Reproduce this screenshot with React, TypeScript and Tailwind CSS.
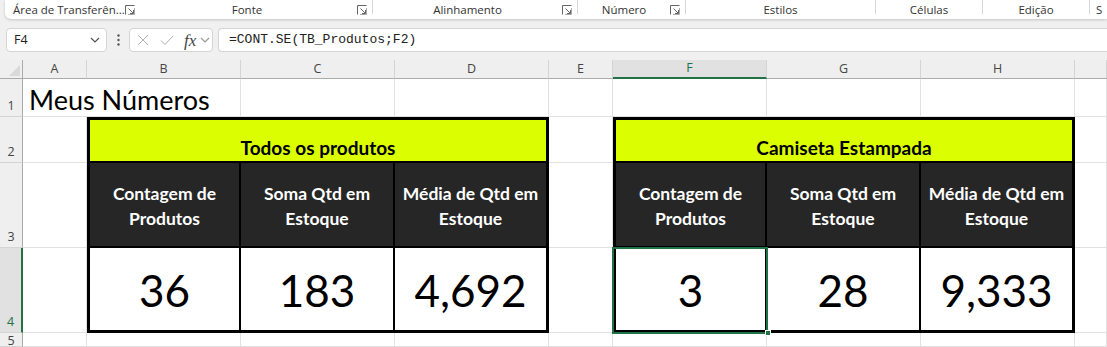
import { ReactNode } from 'react';

const uiFont = { fontFamily: '"Open Sans", "Noto Sans", sans-serif' };

function Launcher() {
  return (
    <svg width="10" height="10" viewBox="0 0 10 10" fill="none" stroke="#666" strokeWidth="1">
      <path d="M0.5 9.5V0.5H9.5" />
      <path d="M3.5 3.5L8.5 8.5M8.5 5V8.5H5" />
      <path d="M9.5 3v6.5H3" stroke="#aaa" />
    </svg>
  );
}

function Chevron({ color = '#555' }: { color?: string }) {
  return (
    <svg width="10" height="6" viewBox="0 0 10 6" fill="none" stroke={color} strokeWidth="1.2">
      <path d="M1 1l4 4 4-4" />
    </svg>
  );
}

function RibbonGroup({ label, width, launcher, left }: { label: string; width: string; launcher?: boolean; left?: boolean }) {
  return (
    <div className={`flex h-full shrink-0 ${width}`}>
      <div className={`flex flex-1 items-center ${left ? 'justify-start pl-[8px]' : 'justify-center'} whitespace-nowrap text-[#333]`}>
        {label}
      </div>
      {launcher && (
        <div className="flex items-center pr-[5px]">
          <Launcher />
        </div>
      )}
      <div className="h-[14px] w-px bg-[#d6d6d6]" />
    </div>
  );
}

function Ribbon() {
  return (
    <div className="ml-[5px] flex h-[19px] rounded-bl-[6px] bg-white text-[11.5px] shadow-[0_1px_3px_rgba(0,0,0,0.18)]" style={uiFont}>
      <RibbonGroup label="Área de Transferên..." width="w-[132px]" launcher left />
      <RibbonGroup label="Fonte" width="w-[236px]" launcher />
      <RibbonGroup label="Alinhamento" width="w-[205px]" launcher />
      <RibbonGroup label="Número" width="w-[108px]" launcher />
      <RibbonGroup label="Estilos" width="w-[190px]" />
      <RibbonGroup label="Células" width="w-[107px]" />
      <RibbonGroup label="Edição" width="w-[107px]" />
      <div className="flex items-center pl-[6px] text-[#333]">S</div>
    </div>
  );
}

function FormulaBar() {
  return (
    <div className="mt-[9px] flex h-[24px] items-stretch" style={uiFont}>
      <div className="ml-[6px] flex w-[101px] items-center justify-between rounded-[4px] border border-[#d4d4d4] bg-white pl-[7px] pr-[6px] text-[12.5px] text-[#222]">
        <span>F4</span>
        <Chevron />
      </div>
      <div className="flex w-[22px] items-center justify-center">
        <svg width="3" height="12" viewBox="0 0 3 12" fill="#555">
          <circle cx="1.5" cy="1.5" r="1.2" />
          <circle cx="1.5" cy="6" r="1.2" />
          <circle cx="1.5" cy="10.5" r="1.2" />
        </svg>
      </div>
      <div className="flex w-[84px] items-center rounded-[4px] border border-[#d4d4d4] bg-white pl-[7px]">
        <svg width="12" height="12" viewBox="0 0 12 12" stroke="#b0b0b0" strokeWidth="1">
          <path d="M1 1l10 10M11 1L1 11" />
        </svg>
        <svg className="ml-[11px]" width="14" height="11" viewBox="0 0 14 11" fill="none" stroke="#b0b0b0" strokeWidth="1">
          <path d="M1 5.5l4 4L13 1" />
        </svg>
        <span className="ml-[10px] text-[17px] italic leading-none text-[#444]" style={{ fontFamily: '"Liberation Serif", serif' }}>
          fx
        </span>
        <span className="ml-[4px]">
          <Chevron color="#999" />
        </span>
      </div>
      <div
        className="ml-[5px] flex flex-1 items-center rounded-l-[4px] border border-r-0 border-[#d4d4d4] bg-white pl-[10px] text-[13px] text-[#222]"
        style={{ fontFamily: '"Liberation Mono", monospace' }}
      >
        =CONT.SE(TB_Produtos;F2)
      </div>
    </div>
  );
}

const grid = 'border-r border-b border-[#e1e1e1]';

function RowHead({ n, selected, top }: { n: number; selected?: boolean; top?: boolean }) {
  return (
    <div
      className={`flex w-[23px] shrink-0 justify-center overflow-hidden text-[12.5px] leading-none border-b border-[#d4d4d4] ${
        top ? 'items-start pt-[2px]' : 'items-end pb-[4px]'
      } ${selected ? 'bg-[#e1e1e1] border-r-2 border-r-[#217346] text-[#217346]' : 'bg-[#efefef] border-r border-r-[#ababab] text-[#444]'}`}
      style={uiFont}
    >
      {n}
    </div>
  );
}

function ColHead({ label, width, selected }: { label: string; width: string; selected?: boolean }) {
  return (
    <div
      className={`flex shrink-0 items-center justify-center border-r border-[#d4d4d4] text-[12.5px] ${width} ${
        selected ? 'bg-[#e1e1e1] border-b-2 border-b-[#217346] text-[#217346]' : 'bg-[#efefef] border-b border-b-[#ababab] text-[#444]'
      }`}
    >
      {label}
    </div>
  );
}

function Blank({ width, className = '', children }: { width: string; className?: string; children?: ReactNode }) {
  return <div className={`shrink-0 ${width} ${grid} ${className}`}>{children}</div>;
}

const headers = ['Contagem de Produtos', 'Soma Qtd em Estoque', 'Média de Qtd em Estoque'];

function DarkCell({ text, pos }: { text: string; pos: number }) {
  const side = pos === 0 ? 'border-l-[3px] border-r-2' : pos === 1 ? 'border-r-2' : 'border-r-[3px]';
  return (
    <div className={`flex w-[154px] shrink-0 items-center justify-center border-b-2 border-black bg-[#262626] px-[6px] pt-[2px] text-center text-[17.5px] font-bold leading-[25px] text-white ${side}`}>
      {text}
    </div>
  );
}

function ValueCell({ value, pos, selected }: { value: string; pos: number; selected?: boolean }) {
  const side = pos === 0 ? 'border-l-[3px] border-r-2' : pos === 1 ? 'border-r-2' : 'border-r-[3px]';
  return (
    <div className={`relative flex w-[154px] shrink-0 items-center justify-center border-b-[3px] border-black bg-white text-[44px] leading-none text-black ${side}`}>
      <span className="pt-[2px]">{value}</span>
      {selected && (
        <>
          <div className="absolute -left-[4px] -top-[1px] -right-[3px] -bottom-[4px] z-10 border-2 border-[#217346]" />
          <div className="absolute -bottom-[6px] -right-[6px] z-10 h-[6px] w-[6px] border border-white bg-[#217346]" />
        </>
      )}
    </div>
  );
}

function TitleCell({ text }: { text: string }) {
  return (
    <div className="flex w-[462px] shrink-0 items-end justify-center border-[3px] border-b-2 border-black bg-[#dbff00] pb-[1px] text-[19px] font-bold leading-[24px]">
      {text}
    </div>
  );
}

function Sheet() {
  const cell = { fontFamily: 'Lato, "Open Sans", sans-serif' };
  return (
    <div className="bg-white" style={cell}>
      {/* column headers */}
      <div className="flex h-[19px]" style={uiFont}>
        <div className="flex w-[23px] shrink-0 items-end justify-end border-r border-b border-[#ababab] bg-[#efefef] pb-[2px] pr-[2px]">
          <svg width="11" height="11" viewBox="0 0 11 11">
            <polygon points="11,0 11,11 0,11" fill="#d9d9d9" />
          </svg>
        </div>
        <ColHead label="A" width="w-[64px]" />
        <ColHead label="B" width="w-[154px]" />
        <ColHead label="C" width="w-[154px]" />
        <ColHead label="D" width="w-[154px]" />
        <ColHead label="E" width="w-[64px]" />
        <ColHead label="F" width="w-[154px]" selected />
        <ColHead label="G" width="w-[154px]" />
        <ColHead label="H" width="w-[154px]" />
        <ColHead label="" width="flex-1" />
      </div>

      {/* row 1 */}
      <div className="flex h-[38px]">
        <RowHead n={1} />
        <div className="flex w-[64px] shrink-0 items-end border-b border-[#e1e1e1] pb-[3px] pl-[6px]">
          <span className="whitespace-nowrap text-[27px] leading-none">Meus Números</span>
        </div>
        <Blank width="w-[154px]" />
        <Blank width="w-[154px]" />
        <Blank width="w-[154px]" />
        <Blank width="w-[64px]" />
        <Blank width="w-[154px]" />
        <Blank width="w-[154px]" />
        <Blank width="w-[154px]" />
        <Blank width="flex-1" />
      </div>

      {/* row 2 */}
      <div className="flex h-[46px]">
        <RowHead n={2} />
        <Blank width="w-[64px]" />
        <TitleCell text="Todos os produtos" />
        <Blank width="w-[64px]" />
        <TitleCell text="Camiseta Estampada" />
        <Blank width="flex-1" />
      </div>

      {/* row 3 */}
      <div className="flex h-[85px]">
        <RowHead n={3} />
        <Blank width="w-[64px]" />
        {headers.map((h, i) => (
          <DarkCell key={'a' + i} text={h} pos={i} />
        ))}
        <Blank width="w-[64px]" />
        {headers.map((h, i) => (
          <DarkCell key={'b' + i} text={h} pos={i} />
        ))}
        <Blank width="flex-1" />
      </div>

      {/* row 4 */}
      <div className="flex h-[85px]">
        <RowHead n={4} selected />
        <Blank width="w-[64px]" />
        <ValueCell value="36" pos={0} />
        <ValueCell value="183" pos={1} />
        <ValueCell value="4,692" pos={2} />
        <Blank width="w-[64px]" />
        <ValueCell value="3" pos={0} selected />
        <ValueCell value="28" pos={1} />
        <ValueCell value="9,333" pos={2} />
        <Blank width="flex-1" />
      </div>

      {/* row 5 */}
      <div className="flex h-[14px]">
        <RowHead n={5} top />
        <Blank width="w-[64px]" />
        <Blank width="w-[154px]" />
        <Blank width="w-[154px]" />
        <Blank width="w-[154px]" />
        <Blank width="w-[64px]" />
        <Blank width="w-[154px]" />
        <Blank width="w-[154px]" />
        <Blank width="w-[154px]" />
        <Blank width="flex-1" />
      </div>
    </div>
  );
}

export default function App() {
  return (
    <div className="h-[347px] w-[1107px] overflow-hidden bg-[#f0f0f0]">
      <div className="h-[60px]">
        <Ribbon />
        <FormulaBar />
      </div>
      <Sheet />
    </div>
  );
}
